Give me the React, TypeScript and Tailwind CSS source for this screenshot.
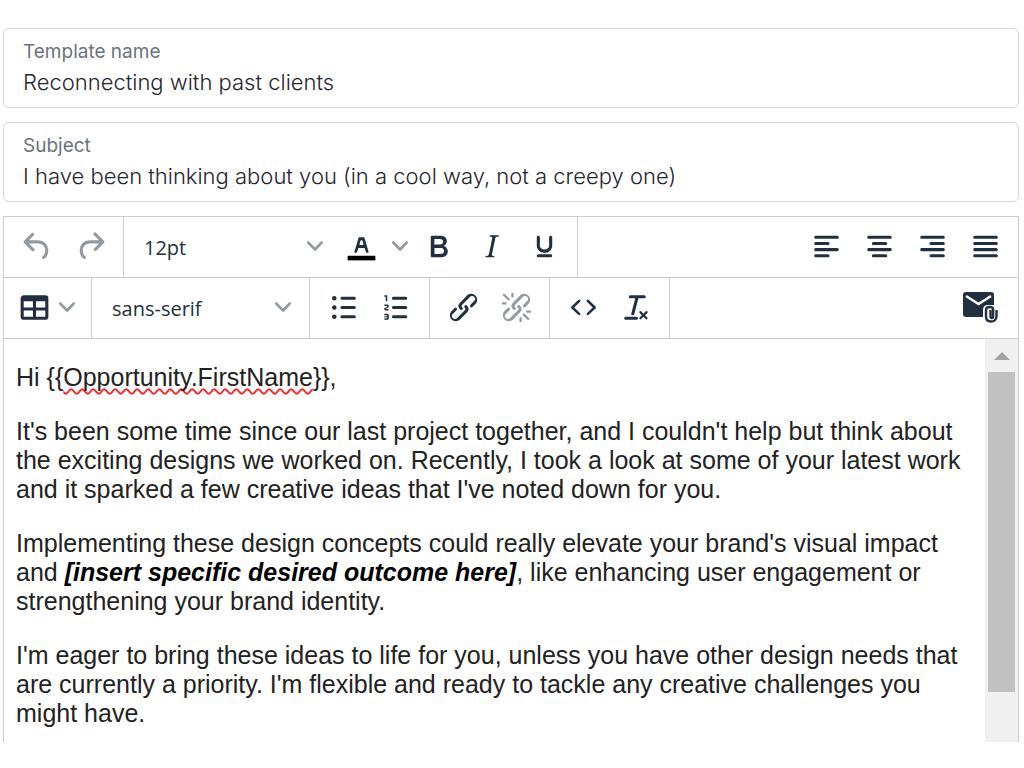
import { useState } from "react";

const icons = {
  undo: "M6.4 8H12c3.7 0 6.2 2 6.8 5.1.6 2.7-.4 5.6-2.3 6.8a1 1 0 0 1-1-1.8c1.1-.6 1.8-2.7 1.4-4.6-.5-2.1-2.1-3.5-4.9-3.5H6.4l3.3 3.3a1 1 0 1 1-1.4 1.4l-5-5a1 1 0 0 1 0-1.4l5-5a1 1 0 0 1 1.4 1.4L6.4 8Z",
  redo: "M17.6 10H12c-2.8 0-4.4 1.4-4.9 3.5-.4 2 .3 4 1.4 4.6a1 1 0 1 1-1 1.8c-2-1.2-2.9-4.1-2.3-6.8.6-3 3-5.1 6.8-5.1h5.6l-3.3-3.3a1 1 0 1 1 1.4-1.4l5 5a1 1 0 0 1 0 1.4l-5 5a1 1 0 0 1-1.4-1.4l3.3-3.3Z",
  textColor:
    "M8.7 16h-.8a.5.5 0 0 1-.5-.6l2.7-9c.1-.3.3-.4.5-.4h2.8c.2 0 .4.1.5.4l2.7 9a.5.5 0 0 1-.5.6h-.8a.5.5 0 0 1-.4-.4l-.7-2.2c0-.3-.3-.4-.5-.4h-3.4c-.2 0-.4.1-.5.4l-.7 2.2c0 .3-.2.4-.4.4Zm2.6-7.6-.6 2a.5.5 0 0 0 .5.6h1.6a.5.5 0 0 0 .5-.6l-.6-2c0-.3-.3-.4-.5-.4h-.4c-.2 0-.4.1-.5.4Z",
  bold: "M7.8 19c-.3 0-.5 0-.6-.2l-.2-.5V5.7c0-.2 0-.4.2-.5l.6-.2h5c1.5 0 2.7.3 3.5 1 .7.6 1.1 1.4 1.1 2.5a3 3 0 0 1-.6 1.9c-.4.6-1 1-1.6 1.2.4.1.9.3 1.3.6s.8.7 1 1.2c.4.4.5 1 .5 1.6 0 1.3-.4 2.3-1.3 3-.8.7-2.1 1-3.8 1H7.8Zm5-8.3c.6 0 1.2-.1 1.6-.5.4-.3.6-.7.6-1.3 0-1.1-.8-1.7-2.3-1.7H9.3v3.5h3.4Zm.5 6c.7 0 1.3-.1 1.7-.4.4-.4.6-.9.6-1.5s-.2-1-.7-1.4c-.4-.3-1-.4-2-.4H9.4v3.8h4Z",
  italic:
    "m16.7 4.7-.1.9h-.3c-.6 0-1 0-1.4.3-.3.3-.4.6-.5 1.1l-2.1 9.8v.6c0 .5.4.8 1.4.8h.2l-.2.8H8l.2-.8h.2c1.1 0 1.8-.5 2-1.5l2-9.8.1-.5c0-.6-.4-.8-1.4-.8h-.3l.2-.9h5.8Z",
  underline:
    "M16 5c.6 0 1 .4 1 1v5.5a4 4 0 0 1-.4 1.8l-1 1.4a5.3 5.3 0 0 1-5.5 1 5 5 0 0 1-1.6-1c-.5-.4-.8-.9-1.1-1.4a4 4 0 0 1-.4-1.8V6c0-.6.4-1 1-1s1 .4 1 1v5.5c0 .3 0 .6.2 1l.6.7a3.3 3.3 0 0 0 2.2.8 3.4 3.4 0 0 0 2.2-.8c.3-.2.4-.5.6-.8l.2-.9V6c0-.6.4-1 1-1ZM8 17h8c.6 0 1 .4 1 1s-.4 1-1 1H8a1 1 0 0 1 0-2Z",
  alignLeft:
    "M5 5h14a1 1 0 0 1 0 2H5a1 1 0 1 1 0-2Zm0 4h8a1 1 0 0 1 0 2H5a1 1 0 1 1 0-2Zm0 8h8a1 1 0 0 1 0 2H5a1 1 0 0 1 0-2Zm0-4h14a1 1 0 0 1 0 2H5a1 1 0 0 1 0-2Z",
  alignCenter:
    "M5 5h14a1 1 0 0 1 0 2H5a1 1 0 1 1 0-2Zm3 4h8a1 1 0 0 1 0 2H8a1 1 0 1 1 0-2Zm0 8h8a1 1 0 0 1 0 2H8a1 1 0 0 1 0-2Zm-3-4h14a1 1 0 0 1 0 2H5a1 1 0 0 1 0-2Z",
  alignRight:
    "M5 5h14a1 1 0 0 1 0 2H5a1 1 0 1 1 0-2Zm6 4h8a1 1 0 0 1 0 2h-8a1 1 0 0 1 0-2Zm0 8h8a1 1 0 0 1 0 2h-8a1 1 0 0 1 0-2Zm-6-4h14a1 1 0 0 1 0 2H5a1 1 0 0 1 0-2Z",
  alignJustify:
    "M5 5h14a1 1 0 0 1 0 2H5a1 1 0 1 1 0-2Zm0 4h14a1 1 0 0 1 0 2H5a1 1 0 1 1 0-2Zm0 4h14a1 1 0 0 1 0 2H5a1 1 0 0 1 0-2Zm0 4h14a1 1 0 0 1 0 2H5a1 1 0 0 1 0-2Z",
  table:
    "M19 4a2 2 0 0 1 2 2v12a2 2 0 0 1-2 2H5a2 2 0 0 1-2-2V6c0-1.1.9-2 2-2h14ZM5 14v4h6v-4H5Zm14 0h-6v4h6v-4Zm0-6h-6v4h6V8ZM5 12h6V8H5v4Z",
  bullets:
    "M11 5h8a1 1 0 0 1 0 2h-8a1 1 0 0 1 0-2Zm0 6h8a1 1 0 0 1 0 2h-8a1 1 0 0 1 0-2Zm0 6h8a1 1 0 0 1 0 2h-8a1 1 0 0 1 0-2ZM4.5 6a1.5 1.5 0 1 1 3 0 1.5 1.5 0 0 1-3 0Zm0 6a1.5 1.5 0 1 1 3 0 1.5 1.5 0 0 1-3 0Zm0 6a1.5 1.5 0 1 1 3 0 1.5 1.5 0 0 1-3 0Z",
  numbers:
    "M10 17h8a1 1 0 0 1 0 2h-8a1 1 0 0 1 0-2Zm0-6h8a1 1 0 0 1 0 2h-8a1 1 0 0 1 0-2Zm0-6h8a1 1 0 0 1 0 2h-8a1 1 0 1 1 0-2ZM6 4v3.5c0 .3-.2.5-.5.5a.5.5 0 0 1-.5-.5V5h-.5a.5.5 0 0 1 0-1H6Zm-1 8.8.2.2h1.3c.3 0 .5.2.5.5s-.2.5-.5.5H4.9a1 1 0 0 1-.9-1V13c0-.4.3-.8.6-1l1.2-.4.2-.3a.2.2 0 0 0-.2-.2H4.5a.5.5 0 0 1-.5-.5c0-.3.2-.5.5-.5h1.6c.5 0 .9.4.9 1v.1c0 .4-.3.8-.6 1l-1.2.4-.2.3ZM7 17v2c0 .6-.4 1-1 1H4.5a.5.5 0 0 1 0-1h1.2c.2 0 .3-.1.3-.3 0-.2-.1-.3-.3-.3H4.4a.4.4 0 1 1 0-.8h1.3c.2 0 .3-.1.3-.3 0-.2-.1-.3-.3-.3H4.5a.5.5 0 1 1 0-1H6c.6 0 1 .4 1 1Z",
  link: "M6.2 12.3a1 1 0 0 1 1.4 1.4l-2 2a2 2 0 1 0 2.6 2.8l4.8-4.8a1 1 0 0 0 0-1.4 1 1 0 1 1 1.4-1.3 2.9 2.9 0 0 1 0 4L9.6 20a3.9 3.9 0 0 1-5.5-5.5l2-2Zm11.6-.6a1 1 0 0 1-1.4-1.4l2-2a2 2 0 1 0-2.6-2.8L11 10.3a1 1 0 0 0 0 1.4A1 1 0 1 1 9.6 13a2.9 2.9 0 0 1 0-4L14.4 4a3.9 3.9 0 0 1 5.5 5.5l-2 2Z",
  unlink:
    "M6.2 12.3a1 1 0 0 1 1.4 1.4l-2 2a2 2 0 1 0 2.6 2.8l4.8-4.8a1 1 0 0 0 0-1.4 1 1 0 1 1 1.4-1.3 2.9 2.9 0 0 1 0 4L9.6 20a3.9 3.9 0 0 1-5.5-5.5l2-2Zm11.6-.6a1 1 0 0 1-1.4-1.4l2-2a2 2 0 1 0-2.6-2.8L11 10.3a1 1 0 0 0 0 1.4A1 1 0 1 1 9.6 13a2.9 2.9 0 0 1 0-4L14.4 4a3.9 3.9 0 0 1 5.5 5.5l-2 2ZM7.6 6.3a.8.8 0 0 1-1 1.1L3.3 4.2a.7.7 0 1 1 1-1l3.2 3.1ZM5.1 8.6a.8.8 0 0 1 0 1.5H3a.8.8 0 0 1 0-1.5H5Zm5-3.5a.8.8 0 0 1-1.5 0V3a.8.8 0 0 1 1.5 0V5Zm6 11.8a.8.8 0 0 1 1-1l3.2 3.2a.8.8 0 0 1-1 1L16 17Zm-2.2 2a.8.8 0 0 1 1.5 0V21a.8.8 0 0 1-1.5 0V19Zm5-3.5a.7.7 0 1 1 0-1.5H21a.8.8 0 0 1 0 1.5H19Z",
  code: "M9.8 15.7c.3.3.3.8 0 1-.3.4-.9.4-1.2 0l-4.4-4.1a.8.8 0 0 1 0-1.2l4.4-4.2c.3-.3.9-.3 1.2 0 .3.3.3.8 0 1.1L6 12l3.8 3.7ZM14.2 15.7c-.3.3-.3.8 0 1 .4.4.9.4 1.2 0l4.4-4.1c.3-.3.3-.9 0-1.2l-4.4-4.2a.8.8 0 0 0-1.2 0c-.3.3-.3.8 0 1.1L18 12l-3.8 3.7Z",
  clearFormat:
    "M13.2 6a1 1 0 0 1 0 .2l-2.6 10a1 1 0 0 1-1 .8h-.2a.8.8 0 0 1-.8-1l2.6-10H8a1 1 0 1 1 0-2h9a1 1 0 0 1 0 2h-3.8ZM5 18h7a1 1 0 0 1 0 2H5a1 1 0 0 1 0-2Zm13 1.5L16.5 18 15 19.5a.7.7 0 0 1-1-1l1.5-1.5-1.5-1.5a.7.7 0 0 1 1-1l1.5 1.5 1.5-1.5a.7.7 0 0 1 1 1L17.5 17l1.5 1.5a.7.7 0 0 1-1 1Z",
};

type IconName = keyof typeof icons;

const Icon = ({ name }: { name: IconName }) => (
  <svg viewBox="0 0 24 24" className="size-[37px] shrink-0" fill="currentColor">
    {name === "textColor" && <path d="M3 18h18v3H3z" fill="#000" />}
    <path fillRule={name === "unlink" ? "nonzero" : "evenodd"} d={icons[name]} />
  </svg>
);

const Chevron = () => (
  <svg viewBox="0 0 10 10" className="size-4 shrink-0 text-[#9299a1]" fill="currentColor">
    <path d="M8.7 2.2c.3-.3.8-.3 1 0 .4.4.4.9 0 1.2L5.7 7.8c-.3.3-.9.3-1.2 0L.2 3.4a.8.8 0 0 1 0-1.2c.3-.3.8-.3 1.1 0L5 6l3.7-3.8Z" />
  </svg>
);

const ToolButton = ({
  name,
  label,
  disabled,
}: {
  name: IconName;
  label: string;
  disabled?: boolean;
}) => (
  <button
    type="button"
    aria-label={label}
    disabled={disabled}
    className="flex h-11 w-[53px] items-center justify-center disabled:text-[#9299a1]"
  >
    <Icon name={name} />
  </button>
);

const ToolSelect = ({ label, options }: { label: string; options: string[] }) => (
  <div className="grid w-[204px] items-center">
    <select
      aria-label={label}
      className="col-start-1 row-start-1 h-11 w-full appearance-none bg-transparent pt-1 pl-[13px] font-['Open_Sans',sans-serif] text-[20px]"
    >
      {options.map((item) => (
        <option key={item}>{item}</option>
      ))}
    </select>
    <div className="pointer-events-none col-start-1 row-start-1 justify-self-end pr-3">
      <Chevron />
    </div>
  </div>
);

const Group = ({ children }: { children: React.ReactNode }) => (
  <div className="flex items-center border-r border-[#ccc] pr-[6px] pb-[2px] pl-[7px]">
    {children}
  </div>
);

const Field = ({
  id,
  label,
  initial,
}: {
  id: string;
  label: string;
  initial: string;
}) => {
  const [value, setValue] = useState(initial);

  return (
    <div className="rounded-md border border-[#d1d5db] px-[19px] pt-[11px] pb-2 font-[Inter,sans-serif]">
      <label htmlFor={id} className="block text-[19px] leading-[24px] text-[#6b7280]">
        {label}
      </label>
      <input
        id={id}
        value={value}
        onChange={(e) => setValue(e.target.value)}
        className="block h-[35px] w-full text-[22px] font-light text-[#1f2530] outline-none"
      />
    </div>
  );
};

export default function App() {
  return (
    <main className="flex flex-col gap-[14px] bg-white pt-7 pr-[5px] pl-[3px]">
      <Field id="template" label="Template name" initial="Reconnecting with past clients" />
      <Field
        id="subject"
        label="Subject"
        initial="I have been thinking about you (in a cool way, not a creepy one)"
      />

      <div className="border border-b-0 border-[#ccc]">
        <div className="flex h-[61px] border-b border-[#ccc] text-[#222f3e]">
          <Group>
            <ToolButton name="undo" label="Undo" disabled />
            <ToolButton name="redo" label="Redo" disabled />
          </Group>
          <Group>
            <ToolSelect label="Font size" options={["12pt", "14pt", "18pt"]} />
            <ToolButton name="textColor" label="Text color" />
            <button
              type="button"
              aria-label="Pick color"
              className="flex h-11 w-6 items-center justify-center"
            >
              <Chevron />
            </button>
            <ToolButton name="bold" label="Bold" />
            <ToolButton name="italic" label="Italic" />
            <ToolButton name="underline" label="Underline" />
          </Group>
          <div className="ml-auto flex items-center pr-[6px] pb-[2px]">
            <ToolButton name="alignLeft" label="Align left" />
            <ToolButton name="alignCenter" label="Align center" />
            <ToolButton name="alignRight" label="Align right" />
            <ToolButton name="alignJustify" label="Justify" />
          </div>
        </div>

        <div className="flex h-[61px] border-b border-[#ccc] text-[#222f3e]">
          <Group>
            <button
              type="button"
              aria-label="Table"
              className="flex h-11 items-center gap-[6px] pr-[10px] pl-[5px]"
            >
              <Icon name="table" />
              <Chevron />
            </button>
          </Group>
          <Group>
            <ToolSelect label="Font family" options={["sans-serif", "serif", "monospace"]} />
          </Group>
          <Group>
            <ToolButton name="bullets" label="Bullet list" />
            <ToolButton name="numbers" label="Numbered list" />
          </Group>
          <Group>
            <ToolButton name="link" label="Link" />
            <ToolButton name="unlink" label="Remove link" disabled />
          </Group>
          <Group>
            <ToolButton name="code" label="Source code" />
            <ToolButton name="clearFormat" label="Clear formatting" />
          </Group>
          <div className="ml-auto flex items-center pr-5 pb-[2px]">
            <button type="button" aria-label="Attach email">
              <svg viewBox="0 0 36 34" className="h-[34px] w-9" fill="none">
                <rect x="1" y="2" width="31" height="25" rx="3" fill="#222f3e" />
                <path d="m4 6 12.5 8L29 6" stroke="#fff" strokeWidth="2.5" />
                <path d="M21 30V20q0-5 5-5h10v19H21z" fill="#fff" />
                <path
                  d="M28.5 20v6q0 2 1.3 2t1.3-2v-6.500q0-2.500-3.500-2.500t-3.600 3v6.500q0 5 5 5t5.500-5V20"
                  stroke="#222f3e"
                  strokeWidth="2.4"
                />
              </svg>
            </button>
          </div>
        </div>

        <div className="flex">
          <div
            contentEditable
            suppressContentEditableWarning
            spellCheck={false}
            className="flex flex-1 flex-col gap-[25px] pt-6 pr-4 pb-[14px] pl-3 font-['Liberation_Sans',Arial,sans-serif] text-[25px] leading-[29px] text-[#222] outline-none"
          >
            <p>
              Hi {"{{"}
              <span className="underline decoration-[#f22] decoration-wavy decoration-2 underline-offset-2 [text-decoration-skip-ink:none]">
                Opportunity.FirstName
              </span>
              {"}}"},
            </p>
            <p>
              It's been some time since our last project together, and I couldn't help but think
              about the exciting designs we worked on. Recently, I took a look at some of your
              latest work and it sparked a few creative ideas that I've noted down for you.
            </p>
            <p>
              Implementing these design concepts could really elevate your brand's visual impact
              and{" "}
              <strong className="text-black italic">[insert specific desired outcome here]</strong>,
              like enhancing user engagement or strengthening your brand identity.
            </p>
            <p>
              I'm eager to bring these ideas to life for you, unless you have other design needs
              that are currently a priority. I'm flexible and ready to tackle any creative
              challenges you might have.
            </p>
          </div>

          <div className="flex w-[33px] flex-col items-center bg-[#f0f0f0]">
            <div className="flex h-[33px] items-center justify-center">
              <svg viewBox="0 0 16 8" className="h-2 w-4" fill="#a3a3a3">
                <path d="M8 0l8 8H0z" />
              </svg>
            </div>
            <div className="h-80 w-[27px] bg-[#c1c1c1]" />
          </div>
        </div>
      </div>
    </main>
  );
}
